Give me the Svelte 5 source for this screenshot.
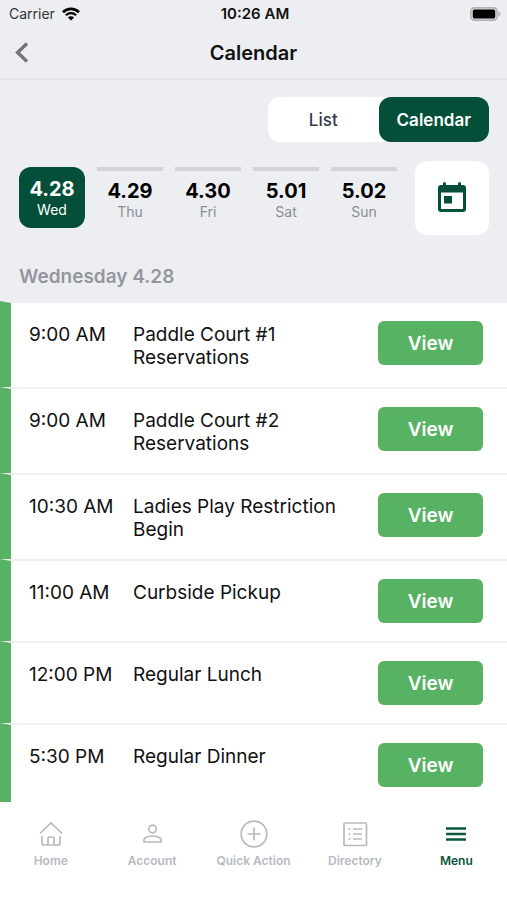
<script>
  let view = 'calendar';
  let selected = '4.28';
  let activeTab = 'Menu';

  const days = [
    { date: '4.28', name: 'Wed' },
    { date: '4.29', name: 'Thu' },
    { date: '4.30', name: 'Fri' },
    { date: '5.01', name: 'Sat' },
    { date: '5.02', name: 'Sun' },
  ];

  const events = [
    { time: '9:00 AM', title: 'Paddle Court #1 Reservations' },
    { time: '9:00 AM', title: 'Paddle Court #2 Reservations' },
    { time: '10:30 AM', title: 'Ladies Play Restriction Begin' },
    { time: '11:00 AM', title: 'Curbside Pickup' },
    { time: '12:00 PM', title: 'Regular Lunch' },
    { time: '5:30 PM', title: 'Regular Dinner' },
  ];

  const tabs = ['Home', 'Account', 'Quick Action', 'Directory', 'Menu'];
</script>

<div class="app">
  <div class="status">
    <div class="carrier">
      <span>Carrier</span>
      <svg width="18" height="14" viewBox="0 0 18 14" aria-hidden="true">
        <path d="M1 5.2a11.4 11.4 0 0 1 16 0" fill="none" stroke="#000" stroke-width="2.6" />
        <path d="M3.9 8.2a7.2 7.2 0 0 1 10.2 0" fill="none" stroke="#000" stroke-width="2.3" />
        <path d="M9 13.6 5.9 10.6a4.4 4.4 0 0 1 6.2 0z" />
      </svg>
    </div>
    <span class="clock">10:26 AM</span>
    <div class="battery">
      <svg width="31" height="14" viewBox="0 0 31 14" aria-hidden="true">
        <rect x="0.8" y="0.8" width="26.4" height="12.4" rx="3.6" fill="#d8d9db" stroke="#b0b1b4" stroke-width="1.4" />
        <rect x="2.8" y="2.6" width="22.4" height="8.8" rx="1.6" />
        <path d="M28.4 4.6c1.3.3 2 1.2 2 2.4s-.7 2.1-2 2.4z" fill="#b0b1b4" />
      </svg>
    </div>
  </div>

  <header>
    <button class="back" aria-label="Back">
      <svg width="14" height="22" viewBox="0 0 14 22" aria-hidden="true">
        <path d="M12 1.500 2.600 10.500l9.400 9" fill="none" stroke="#757575" stroke-width="3.4" />
      </svg>
    </button>
    <h1>Calendar</h1>
  </header>

  <section class="controls">
    <div class="toggle">
      <button class:on={view === 'list'} on:click={() => (view = 'list')}>List</button>
      <button class:on={view === 'calendar'} on:click={() => (view = 'calendar')}>Calendar</button>
    </div>

    <div class="strip">
      <div class="days">
        {#each days as day}
          <button
            class="day"
            class:selected={day.date === selected}
            on:click={() => (selected = day.date)}
          >
            <strong>{day.date}</strong>
            <span>{day.name}</span>
          </button>
        {/each}
      </div>
      <button class="picker" aria-label="Pick a date">
        <svg width="28" height="34" viewBox="0 0 28 34" aria-hidden="true">
          <path
            fill-rule="evenodd"
            d="M5 2.500a1.500 1.500 0 0 1 3 0V4h12V2.500a1.500 1.500 0 0 1 3 0V4h2a3 3 0 0 1 3 3v21a3 3 0 0 1-3 3H3a3 3 0 0 1-3-3V7a3 3 0 0 1 3-3h2zM3 11.500v16.500h22V11.500z"
          />
          <rect x="6" y="15" width="8" height="7.500" />
        </svg>
      </button>
    </div>

    <h2>Wednesday 4.28</h2>
  </section>

  <ul class="events">
    {#each events as event}
      <li>
        <span class="time">{event.time}</span>
        <span class="title">{event.title}</span>
        <button class="view">View</button>
      </li>
    {/each}
  </ul>

  <nav>
    {#each tabs as tab}
      <button class="tab" class:active={tab === activeTab} on:click={() => (activeTab = tab)}>
        <svg width="28" height="28" viewBox="0 0 28 28" aria-hidden="true">
          {#if tab === 'Home'}
            <path d="M3 13.500 14 3l11 10.500M5 16v7a2 2 0 0 0 2 2h14a2 2 0 0 0 2-2v-7M11 25v-6.500a1.500 1.500 0 0 1 1.500-1.500h3a1.500 1.500 0 0 1 1.500 1.500V25" />
          {:else if tab === 'Account'}
            <circle cx="14.500" cy="9" r="3.800" />
            <path d="M6 22v-2c0-2.700 4.500-4 8.500-4s8.500 1.300 8.500 4v2z" />
          {:else if tab === 'Quick Action'}
            <circle cx="14" cy="14" r="12.800" />
            <path d="M14 7.500v13M7.500 14h13" />
          {:else if tab === 'Directory'}
            <rect x="3" y="3" width="22.500" height="22.500" rx="1" />
            <path d="M7.500 9h2M12 9h9M7.500 14h2M12 14h9M7.500 19h2M12 19h9" />
          {:else}
            <path class="bars" d="M4 8.500h20M4 14h20M4 19.500h20" />
          {/if}
        </svg>
        <span>{tab}</span>
      </button>
    {/each}
  </nav>
</div>

<style>
  :global(body) {
    margin: 0;
  }
  .app {
    display: flex;
    flex-direction: column;
    height: 100vh;
    overflow: hidden;
    background: #edeef2;
    color: #111;
    font-family: Inter, 'Liberation Sans', sans-serif;
  }
  button {
    border: 0;
    padding: 0;
    background: none;
    color: inherit;
    font-family: inherit;
    cursor: pointer;
  }

  .status {
    display: grid;
    grid-template-columns: 1fr auto 1fr;
    align-items: center;
    height: 27px;
    padding: 0 6px 0 9px;
    font-size: 14px;
  }
  .carrier {
    display: flex;
    align-items: center;
    gap: 7px;
    color: #333;
  }
  .clock {
    font-size: 15px;
    font-weight: 600;
  }
  .battery {
    display: flex;
    justify-content: flex-end;
  }

  header {
    display: grid;
    grid-template-columns: 1fr auto 1fr;
    align-items: center;
    height: 51px;
    padding: 0 15px;
    border-bottom: 2px solid #e1e2e5;
  }
  .back {
    display: flex;
    justify-self: start;
  }
  h1 {
    margin: 0;
    font-size: 20px;
    font-weight: 600;
  }

  .controls {
    padding: 17px 18px 0 19px;
  }
  .toggle {
    display: flex;
    width: 221px;
    height: 45px;
    margin-left: auto;
    border-radius: 12px;
    background: #fff;
  }
  .toggle button {
    flex: 1;
    border-radius: 12px;
    color: #37374a;
    font-size: 17px;
    font-weight: 500;
  }
  .toggle .on {
    background: #034f3a;
    color: #fff;
    font-weight: 600;
  }

  .strip {
    display: flex;
    gap: 18px;
    margin-top: 19px;
  }
  .days {
    display: flex;
    flex: 1;
    align-items: flex-start;
    gap: 12px;
    padding-top: 6px;
  }
  .day {
    display: flex;
    flex: 1;
    flex-direction: column;
    align-items: center;
    height: 61px;
    padding-top: 9px;
    border-top: 4px solid #d3d5d9;
  }
  .day strong {
    color: #000;
    font-size: 20px;
    font-weight: 700;
    line-height: 22px;
  }
  .day span {
    color: #8b8d92;
    font-size: 14px;
    line-height: 20px;
  }
  .day.selected {
    padding-top: 11px;
    border-top: 0;
    border-radius: 12px;
    background: #034f3a;
  }
  .day.selected strong,
  .day.selected span {
    color: #fff;
  }
  .picker {
    display: flex;
    align-items: center;
    justify-content: center;
    width: 74px;
    height: 74px;
    border-radius: 12px;
    background: #fff;
    fill: #034f3a;
  }

  h2 {
    margin: 30px 0 12px;
    color: #94969d;
    font-size: 19px;
    font-weight: 600;
    line-height: 24px;
  }

  .events {
    flex: 1;
    min-height: 0;
    margin: 0;
    padding: 0;
    overflow: hidden;
    list-style: none;
    background: #fff;
  }
  .events li {
    display: flex;
    align-items: flex-start;
    padding: 18px 24px 18px 18px;
    border-top: 2px solid #f0f0f2;
    border-left: 11px solid #57b263;
  }
  .time,
  .title {
    padding-top: 2px;
    font-size: 19px;
    line-height: 23px;
  }
  .time {
    width: 104px;
    flex-shrink: 0;
  }
  .title {
    flex: 1;
    padding-right: 40px;
  }
  .view {
    width: 105px;
    height: 44px;
    border-radius: 6px;
    background: #57b263;
    color: #fff;
    font-size: 19px;
    font-weight: 600;
  }

  nav {
    display: flex;
    height: 98px;
    background: #fff;
  }
  .tab {
    display: flex;
    flex: 1;
    flex-direction: column;
    align-items: center;
    gap: 5px;
    padding-top: 18px;
    color: #b7babf;
    font-size: 12px;
    font-weight: 600;
    line-height: 16px;
    white-space: nowrap;
  }
  .tab svg {
    fill: none;
    stroke: currentColor;
    stroke-width: 1.7;
  }
  .tab .bars {
    stroke-width: 2.6;
  }
  .tab.active {
    color: #0b5740;
  }
</style>
